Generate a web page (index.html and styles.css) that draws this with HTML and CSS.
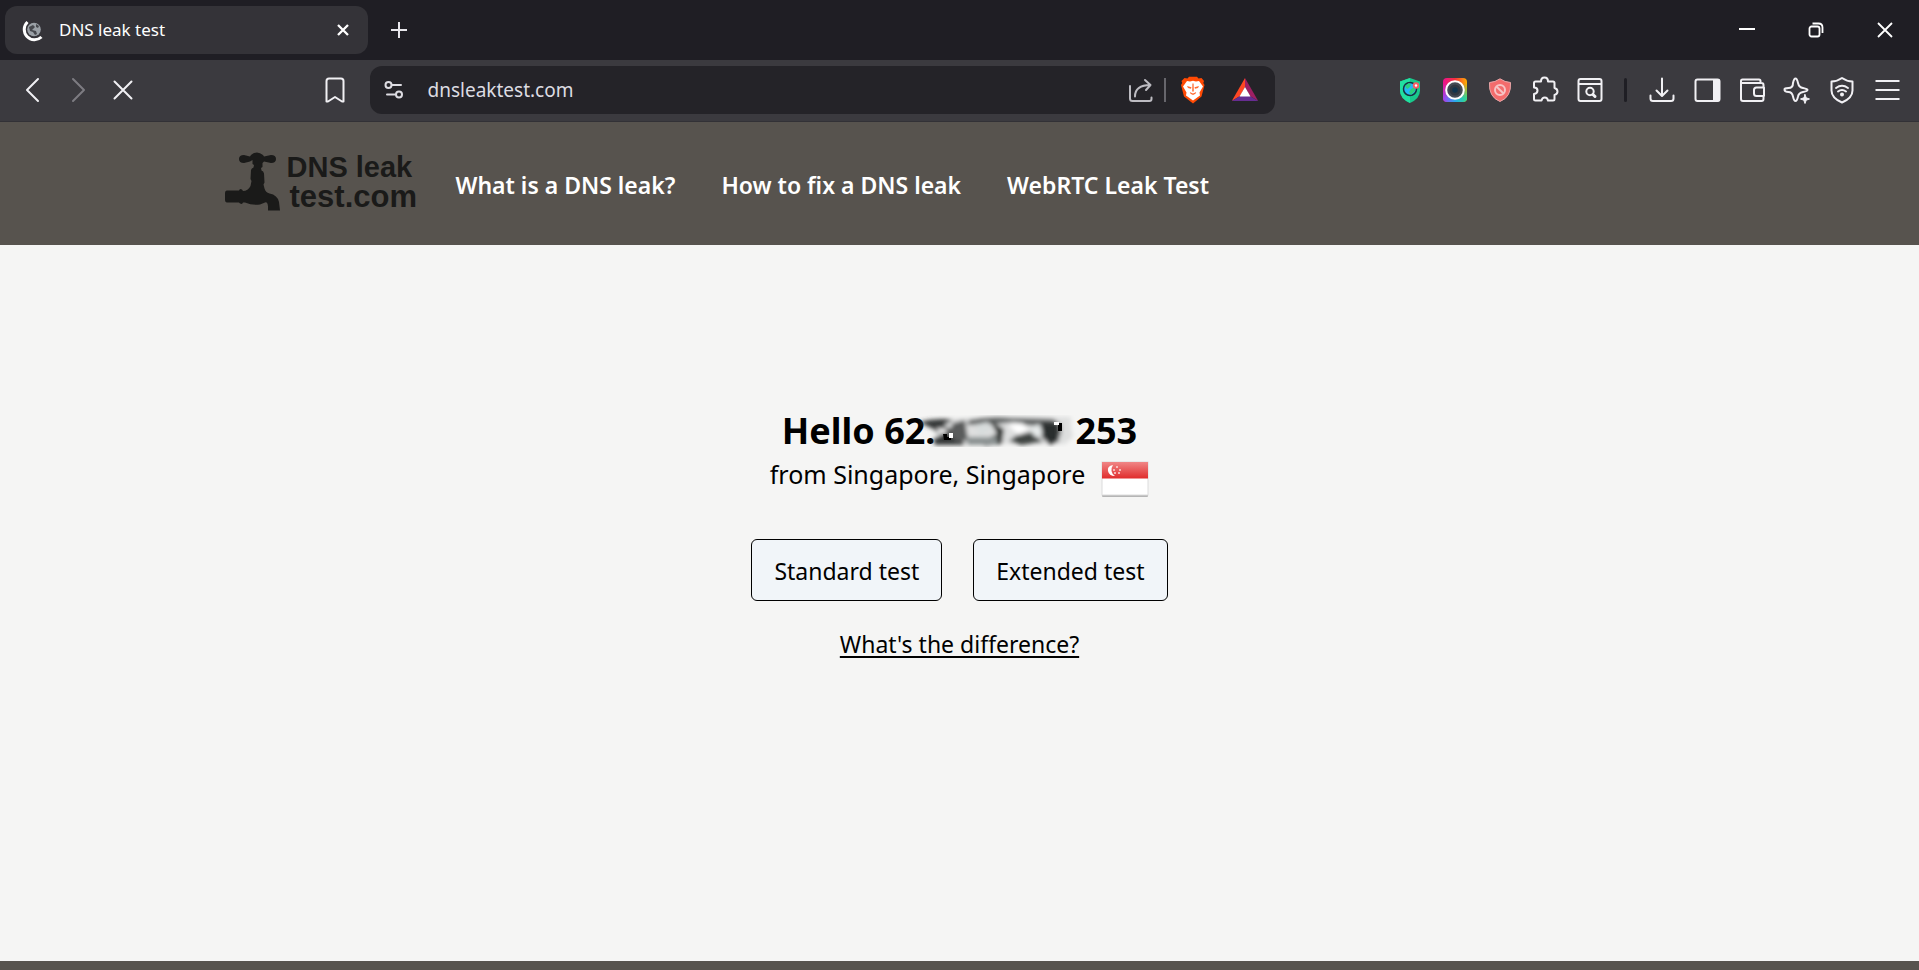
FILE: index.html
```
<!DOCTYPE html>
<html lang="en">
<head>
<meta charset="utf-8">
<title>DNS leak test</title>
<link rel="stylesheet" href="styles.css">
</head>
<body>
<div class="tabstrip">
  <div class="tab">
    <svg class="tab-icon" viewBox="0 0 24 24" aria-hidden="true">
      <circle cx="13" cy="11.500" r="6.800" fill="#9aa0a6"/>
      <path d="M8 9l4-2 2 2-3 3 4 1 1 3-2 1-2-3-3-1z M15 6l3 2-1 2-2-1z" fill="#46484d"/>
      <path d="M6.500 4A9.600 9.600 0 1 0 20.500 19" fill="none" stroke="#fff" stroke-width="3"/>
    </svg>
    <span class="tab-title">DNS leak test</span>
    <button class="tab-close" aria-label="Close tab"><svg viewBox="0 0 14 14"><path d="M2 2l10 10M12 2L2 12" stroke="#fff" stroke-width="2.300"/></svg></button>
  </div>
  <button class="new-tab" aria-label="New tab"><svg viewBox="0 0 18 18"><path d="M9 1v16M1 9h16" stroke="#e8e7ec" stroke-width="2"/></svg></button>
  <div class="window-controls">
    <button aria-label="Minimize"><svg viewBox="0 0 16 16"><path d="M0 7h16" stroke="#fff" stroke-width="2"/></svg></button>
    <button aria-label="Restore"><svg viewBox="0 0 16 16"><rect x="1.500" y="4.500" width="10" height="10" rx="2" class="win"/><path d="M4.500 1.500h6q4 0 4 4v5.500" class="win"/></svg></button>
    <button aria-label="Close"><svg viewBox="0 0 16 16"><path d="M1 1l14 14M15 1L1 15" stroke="#fff" stroke-width="1.800"/></svg></button>
  </div>
</div>

<div class="toolbar">
  <div class="group">
    <button aria-label="Back"><svg class="ico" viewBox="0 0 28 28"><path d="M19 3L8 14l11 11"/></svg></button>
    <button aria-label="Forward" class="dim"><svg class="ico" viewBox="0 0 28 28"><path d="M9 3l11 11L9 25"/></svg></button>
    <button aria-label="Stop"><svg class="ico" viewBox="0 0 28 28"><path d="M5.500 5.500l17 17M22.500 5.500l-17 17"/></svg></button>
  </div>
  <span class="space-before"></span>
  <button class="bookmark" aria-label="Bookmark"><svg class="ico" viewBox="0 0 28 28"><path d="M5.500 5q0-2.500 2.500-2.500h12q2.500 0 2.500 2.500v20.500h-1.500l-7-4.500-7 4.500H5.500z"/></svg></button>
  <div class="omnibox">
    <button aria-label="Site information"><svg class="ico thin" viewBox="0 0 28 28"><circle cx="8.500" cy="9" r="3"/><path d="M12 9h9M7 18.500h8.500"/><circle cx="19" cy="18.500" r="3"/></svg></button>
    <input type="text" value="dnsleaktest.com" aria-label="Address" spellcheck="false">
    <button class="share" aria-label="Share"><svg class="ico" viewBox="0 0 28 28"><path d="M3 10v12.500q0 2.500 2.500 2.500h17q2 0 2-2v-1.500M8 20.500q0-11.500 15.500-11.500M18 4l5.500 5-4.500 5"/></svg></button>
    <span class="omni-line"></span>
    <button class="omni-btn" aria-label="Brave Shields"><svg class="pic" viewBox="0 0 28 28">
      <path d="M8.500 2.500L10 .800h8l1.500 1.700 3-.500 2.500 3-.700 2 1.200 2-3 11.500L14 27.500 5 20.500 2 9l1.200-2-.700-2L5.500 2z" fill="#ff4a04"/>
      <path d="M8 5l3 .500 3-.800 3 .800 3-.500 4 5.500-3.500 6 .500 3-3.500 2.500-3.500 2.500-3.500-2.500L7 19.500l.500-3-3.500-6z" fill="#fff"/>
      <path d="M8 10l4.500 1.200-.500 1.500-3-.700zM20 10l-4.500 1.200.500 1.500 3-.700zM13.400 7.500h1.200l.200 8h-1.600zM10.800 16l3.200 1.600 3.200-1.600-.700 1.800-2.500 1.200-2.500-1.200z" fill="#ff6a30"/></svg></button>
    <button class="omni-btn last" aria-label="Rewards"><svg class="pic" viewBox="0 0 28 28"><path d="M14 2L.800 25l8.200-5 5-9z" fill="#ff4724"/><path d="M14 2l13.200 23-8.200-5-5-9z" fill="#9e1f63"/><path d="M.800 25h26.400L19 20H9z" fill="#662d91"/><path d="M14 11l5.500 9.500h-11z" fill="#fff"/></svg></button>
  </div>
  <span class="space-after"></span>
  <div class="group">
    <button aria-label="Location guard"><svg class="pic" viewBox="0 0 28 28"><path d="M14 2l10 3.500v9q0 8-10 12.500Q4 22.500 4 14.500v-9z" fill="#18c98c"/><path d="M14 2v25Q4 22.500 4 14.500v-9z" fill="#21dfa0"/><circle cx="14" cy="13" r="6.500" fill="#24b7f5" stroke="#17323f" stroke-width="1.500"/><path d="M9 10l4-3 2 2-2 3-2 1zM15 13l4-2v4l-4 4-2-3z" fill="#29d17d"/><circle cx="20" cy="9.500" r="3.200" fill="#f65d66"/><circle cx="20" cy="9.500" r="1.200" fill="#fff"/></svg></button>
    <button aria-label="Camera"><svg class="pic" viewBox="0 0 28 28">
      <defs><linearGradient id="warm" x1="0" y1="0" x2="1" y2="0"><stop offset="0" stop-color="#ec1190"/><stop offset=".5" stop-color="#f5313d"/><stop offset="1" stop-color="#ffb000"/></linearGradient><linearGradient id="cool" x1="0" y1="0" x2="1" y2="0"><stop offset="0" stop-color="#a83cf0"/><stop offset=".5" stop-color="#28a9ee"/><stop offset="1" stop-color="#2fdc8c"/></linearGradient><linearGradient id="fade" x1="0" y1="0" x2="0" y2="1"><stop offset=".25" stop-color="#000"/><stop offset=".8" stop-color="#fff"/></linearGradient><mask id="low"><rect width="28" height="28" fill="url(#fade)"/></mask></defs>
      <rect x="2" y="2" width="24" height="24" rx="4" fill="url(#warm)"/><rect x="2" y="2" width="24" height="24" rx="4" fill="url(#cool)" mask="url(#low)"/><circle cx="14" cy="14" r="8.800" fill="#454b55" stroke="#fff" stroke-width="2"/><circle cx="14" cy="14" r="5.500" fill="#303842"/><circle cx="14" cy="14" r="2.800" fill="#12344e"/></svg></button>
    <button aria-label="Ad blocker"><svg class="pic" viewBox="0 0 28 28"><path d="M14 2.800q5 3.500 10.500 3.700 1 14.500-10.500 19Q2.500 21 3.500 6.500 9 6.300 14 2.800z" fill="#f36c6c" stroke="#e9a6a8"/><circle cx="14" cy="14" r="5" fill="none" stroke="#f6c4c5" stroke-width="2"/><path d="M10.500 10.500l7 7" stroke="#f6c4c5" stroke-width="2"/></svg></button>
    <button aria-label="Extensions"><svg class="ico" viewBox="0 0 28 28"><path d="M4.500 5.500H10q0-4 3.500-4t3.500 4h5q1.500 0 1.500 1.500v5q3 .800 3 3.500t-3 3.500v4q0 1.500-1.500 1.500h-5q-.500-3-3.200-3t-3.300 3H4.500Q3 24.500 3 23v-5q3.500-.500 3.500-3.500T3 11.500V7q0-1.500 1.500-1.500z"/></svg></button>
    <button aria-label="Search in page"><svg class="ico" viewBox="0 0 28 28"><rect x="2.500" y="3" width="23" height="22" rx="2"/><path d="M3 8h22"/><circle cx="14" cy="15.500" r="3.700"/><path d="M17 18.500l2 2" stroke-width="3"/></svg></button>
  </div>
  <span class="tool-line"></span>
  <div class="group">
    <button aria-label="Downloads"><svg class="ico" viewBox="0 0 28 28"><path d="M14 2.500v17M8.500 14.500L14 20l5.500-5.500M2.500 19.500v3q0 2.500 2.500 2.500h18q2.500 0 2.500-2.500v-3"/></svg></button>
    <button aria-label="Sidebar"><svg class="ico" viewBox="0 0 28 28"><rect x="2.500" y="3.500" width="24" height="21.500" rx="2"/><path d="M20 3h5q2 0 2 2v18.500q0 2-2 2h-5z" fill="#f1f0f4" stroke="none"/></svg></button>
    <button aria-label="Wallet"><svg class="ico" viewBox="0 0 28 28"><path d="M25.500 11.500V9q0-2-2-2H3V23q0 2 2 2h18.500q2 0 2-2v-2.500M3 7V5q0-1.500 1.500-1.500H21q1.500 0 1.500 1.500v2M26 11.500h-7.500q-2.500 0-2.500 2.500v3.500q0 2.500 2.500 2.500H26z"/></svg></button>
    <button aria-label="Leo AI"><svg class="ico" viewBox="0 0 28 28"><path d="M12.500 2.500q1.500 0 2.500 4.500t5 5q4.500 1 4.500 2t-4.500 2-5 4.500q-1 4.500-2.500 4.500T10 20.500 5.500 16 1.500 14t4-2T10 7q1-4.500 2.500-4.500z"/><path d="M22 18.500l1.200 3.300 3.300 1.200-3.300 1.200L22 27.500l-1.200-3.300-3.300-1.200 3.300-1.200z" fill="#f1f0f4" stroke-width="1"/></svg></button>
    <button aria-label="VPN"><svg class="ico" viewBox="0 0 28 28"><path d="M14 2q5 3.500 10.500 3.500v9Q24.500 22 14 26.500 3.500 22 3.500 14.500v-9Q9 5.500 14 2z"/><path d="M8 12q6-4.500 12 0M10 15.500q4-3 8 0"/><circle cx="14" cy="18.500" r="1" fill="#f1f0f4"/></svg></button>
    <button aria-label="Menu"><svg class="ico" viewBox="0 0 28 28"><path d="M2.500 5h24M2.500 14h24M2.500 23h24" stroke-linecap="butt"/></svg></button>
  </div>
</div>

<header class="site-header">
  <div class="container">
    <a href="#" class="logo" aria-label="DNS leak test.com">
      <svg class="tap" viewBox="0 0 58 60" aria-hidden="true">
        <path d="M26 3q6-5 12 0l1 1.500 7-1.500q5 0 5 4t-5 4l-7-1.500-1.500 1.500v4l-1.500 1 .500 2.500q2 .500 2.500 3l.500 9-1 2 1 4q1 4 5 5 8 1.500 9.500 8.500l1 8.500H43v-4q-.500-5-3-4l-5 2q-8 1-15-2h-2l-1 1.500-2-.500-1-1H2q-2 0-2-3v-6q0-3 2-3h12l1-1.500 2 .500 1 1.500q5 0 7.500-5l1-5-1-2 .500-9q.500-2 2.500-2.500l.500-2.500-1.500-1v-4L25 9.500 19 11q-5 0-5-4t5-4l6 1.500z"/>
      </svg>
      <span class="wordmark"><span class="upper">DNS leak</span><span class="lower">test.com</span></span>
    </a>
    <nav>
      <a href="#">What is a DNS leak?</a>
      <a href="#">How to fix a DNS leak</a>
      <a href="#">WebRTC Leak Test</a>
    </nav>
  </div>
</header>

<main>
  <h1><span>Hello 62.</span><svg class="smudge" viewBox="0 0 162 32" aria-hidden="true">
      <defs><filter id="soft" x="-10%" y="-20%" width="120%" height="140%"><feGaussianBlur stdDeviation="2"/></filter></defs>
      <g filter="url(#soft)">
        <path d="M10 5l36-2 44-2 62 1v10l2 10-8 7H46l-26-2z" fill="#dedfdf"/>
        <path d="M0 7q18-5 34-2l-10 6 14 5 8 14H16l-2-6 8-4-8-6z" fill="#353737"/>
        <path d="M34 8l12-3 3 20-11 2-9-8z" fill="#5a5c5c"/>
        <path d="M50 5q20-4 42-2l42 1 8 6v10l-10 8-6-8-2-8-18-2-10-3-18 2-30 1z" fill="#606464"/>
        <path d="M71 6l14 8-2 15-18 2 4-8 9-4z" fill="#303433"/>
        <path d="M48 22h30v8H48z" fill="#8b9292"/>
        <path d="M98 20l14-3 12 10-22 3-12-4z" fill="#3f4443"/>
        <path d="M123 7l16 1 1 18-9 4-9-9z" fill="#292e2d"/>
        <path d="M55 10l14-3 4 8-12 6z" fill="#d8dddd"/>
        <path d="M89 10l14-2 7 6-10 6z" fill="#fff"/>
        <path d="M110 13l10-4 4 10-8 3z" fill="#e6eaea"/>
        <path d="M18 13l9 1 1 4-8 1z" fill="#f0f0f0"/>
      </g>
      <path d="M24 19h4v3h4v3h-7zM139 8h4v8h-4z" fill="#000"/>
      <path d="M135 7h5v3h-5zM30 18h4v5h-4z" fill="#fff"/>
    </svg><span>253</span></h1>
  <p class="place">from Singapore, Singapore
    <svg class="flag" viewBox="0 0 48 37" role="img" aria-label="Singapore">
      <defs><linearGradient id="red" x1="0" y1="0" x2="0" y2="1"><stop offset="0" stop-color="#f08686"/><stop offset="1" stop-color="#e02c2c"/></linearGradient></defs>
      <rect x="1" y="2" width="46" height="34" rx="1" fill="#b5b5b5"/><rect x="1" y="1" width="46" height="33" fill="#fff" stroke="#dcdcdc"/><path d="M1 1h46v16.500H1z" fill="url(#red)"/>
      <path d="M12 4q-6 1-5 6t7 5q-3-2-3.500-5T12 4z" fill="#fff"/><g fill="#fadada"><circle cx="16" cy="6" r="1"/><circle cx="13" cy="9" r="1"/><circle cx="19" cy="9" r="1"/><circle cx="14" cy="12" r="1"/><circle cx="18" cy="12" r="1"/></g>
    </svg></p>
  <div class="actions">
    <button>Standard test</button>
    <button>Extended test</button>
  </div>
  <a href="#" class="difference">What's the difference?</a>
</main>
<footer></footer>
</body>
</html>
```
FILE: styles.css
```
* { box-sizing: border-box; }
body {
  margin: 0;
  min-height: 100vh;
  display: flex;
  flex-direction: column;
  background: #f5f5f4;
  color: #000;
  font-family: "Noto Sans", "Open Sans", sans-serif;
}
button {
  padding: 0;
  border: 0;
  background: none;
  color: inherit;
  font: inherit;
}
svg { display: block; }

.tabstrip {
  display: flex;
  align-items: center;
  height: 60px;
  padding-left: 5px;
  background: #1f1e24;
}
.tab {
  display: flex;
  align-items: center;
  width: 363px;
  height: 48px;
  padding: 0 18px 0 16px;
  border-radius: 12px;
  background: #343338;
}
.tab-icon { width: 24px; height: 24px; }
.tab-title {
  flex: 1;
  margin-left: 14px;
  padding-bottom: 2px;
  color: #fff;
  font-size: 17px;
}
.tab-close svg { width: 14px; height: 14px; }
.new-tab { margin-left: 22px; }
.new-tab svg { width: 18px; height: 18px; }
.window-controls { display: flex; margin-left: auto; }
.window-controls button {
  display: grid;
  place-items: center;
  width: 69px;
  height: 60px;
}
.window-controls svg { width: 16px; height: 16px; }
.win { fill: none; stroke: #fff; stroke-width: 1.8; }

.toolbar {
  display: flex;
  align-items: center;
  height: 62px;
  padding: 0 10px 1px;
  border-bottom: 1px solid #323136;
  background: #3b3a3f;
}
.group { display: flex; }
.group button, .bookmark {
  display: grid;
  place-items: center;
  width: 45px;
  height: 45px;
}
.ico {
  width: 28px;
  height: 28px;
  fill: none;
  stroke: #f1f0f4;
  stroke-width: 2;
  stroke-linecap: round;
  stroke-linejoin: round;
}
.thin { stroke: #dddce2; }
.dim .ico { stroke: #7d7c82; }
.pic { width: 28px; height: 28px; }
.space-before { flex: 3; }
.space-after { flex: 2; }
.omnibox {
  display: flex;
  align-items: center;
  width: 47.7%;
  min-width: 0;
  height: 48px;
  margin-left: 12px;
  padding: 0 16px 0 10px;
  border-radius: 12px;
  background: #242328;
}
.omnibox input {
  flex: 1;
  min-width: 0;
  margin-left: 20px;
  padding: 0;
  border: 0;
  outline: 0;
  background: none;
  color: #dddce2;
  font: 19px "Noto Sans", sans-serif;
}
.share .ico { stroke: #bdbcc2; }
.omni-line {
  width: 2px;
  height: 24px;
  margin: 0 13px 0 9px;
  background: #67666c;
}
.omni-btn.last { margin-left: 24px; }
.tool-line {
  width: 3px;
  height: 24px;
  margin: 0 12px;
  border-radius: 2px;
  background: #1f1e24;
}

.site-header {
  padding: 30px 24px 31px;
  background: #57534e;
}
.container {
  display: flex;
  align-items: center;
  max-width: 1470px;
  margin: 0 auto;
}
.logo {
  display: flex;
  align-items: flex-start;
  width: 196px;
  height: 62px;
  color: #1a1a19;
  text-decoration: none;
}
.tap { width: 58px; height: 60px; fill: #1a1a19; }
.wordmark {
  display: flex;
  flex-direction: column;
  margin-left: 4px;
  font: 700 29px/30px "Liberation Sans", sans-serif;
}
.lower { padding-left: 3px; font-size: 31px; }
nav {
  display: flex;
  gap: 46px;
  margin-left: 35px;
  padding-top: 4px;
}
nav a {
  color: #fff;
  font-size: 23px;
  font-weight: 600;
  text-decoration: none;
}

main {
  flex: 1;
  display: flex;
  flex-direction: column;
  align-items: center;
  padding: 160px 24px 0;
}
h1 {
  display: flex;
  align-items: center;
  margin: 0;
  font-size: 36px;
  line-height: 52px;
}
.smudge { width: 162px; height: 32px; margin: 0 -6px 0 -16px; }
.place {
  display: flex;
  align-items: flex-start;
  gap: 16px;
  margin: 0;
  font-size: 25px;
  line-height: 34px;
}
.flag { width: 48px; height: 37px; margin-top: 4px; }
.actions {
  display: flex;
  gap: 31px;
  margin-top: 41px;
}
.actions button {
  height: 62px;
  padding: 2px 22px 0;
  border: 1px solid #000;
  border-radius: 6px;
  background: #f1f5f9;
  font-size: 23px;
}
.difference {
  margin-top: 25px;
  color: #000;
  font-size: 23px;
  line-height: 36px;
  text-decoration-thickness: 2px;
  text-underline-offset: 3px;
}
footer { height: 9px; background: #57534e; }
```
